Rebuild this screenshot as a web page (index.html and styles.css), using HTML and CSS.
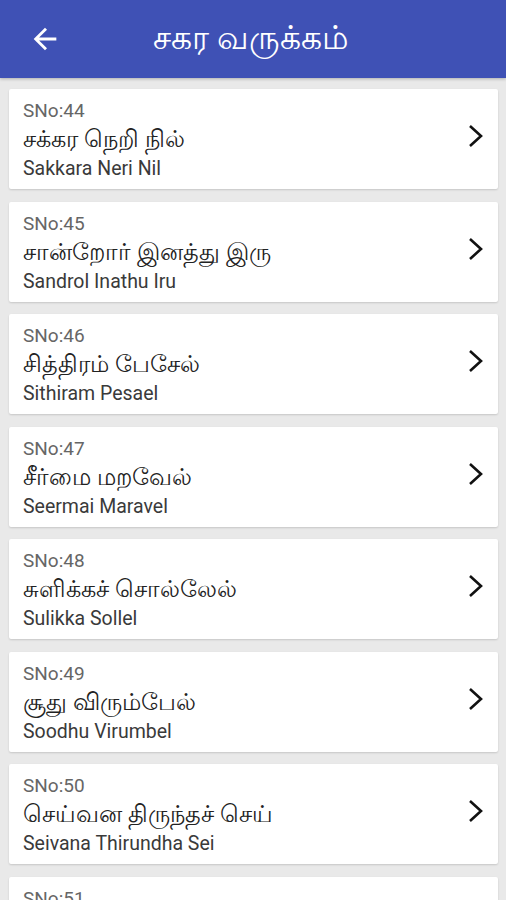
FILE: index.html
```html
<!DOCTYPE html>
<html lang="ta">
<head>
    <meta charset="UTF-8">
    <meta name="viewport" content="width=device-width, initial-scale=1.0">
    <title>சகர வருக்கம்</title>
    <link rel="stylesheet" href="styles.css">
</head>
<body>
    <header class="app-bar">
        <svg class="back-icon" viewBox="0 0 24 24" width="34" height="34">
            <path d="M20 11H7.83l5.59-5.59L12 4l-8 8 8 8 1.41-1.41L7.83 13H20v-2z" fill="#fff"/>
        </svg>
        <h1 class="title">சகர வருக்கம்</h1>
    </header>
    <main class="list">
        <div class="card">
            <div class="card-text">
                <div class="sno">SNo:44</div>
                <div class="tamil">சக்கர நெறி நில்</div>
                <div class="english">Sakkara Neri Nil</div>
            </div>
            <svg class="chevron" viewBox="0 0 16 24" width="16" height="24"><polyline points="2,2 13,12 2,22"/></svg>
        </div>
        <div class="card">
            <div class="card-text">
                <div class="sno">SNo:45</div>
                <div class="tamil">சான்றோர் இனத்து இரு</div>
                <div class="english">Sandrol Inathu Iru</div>
            </div>
            <svg class="chevron" viewBox="0 0 16 24" width="16" height="24"><polyline points="2,2 13,12 2,22"/></svg>
        </div>
        <div class="card">
            <div class="card-text">
                <div class="sno">SNo:46</div>
                <div class="tamil">சித்திரம் பேசேல்</div>
                <div class="english">Sithiram Pesael</div>
            </div>
            <svg class="chevron" viewBox="0 0 16 24" width="16" height="24"><polyline points="2,2 13,12 2,22"/></svg>
        </div>
        <div class="card">
            <div class="card-text">
                <div class="sno">SNo:47</div>
                <div class="tamil">சீர்மை மறவேல்</div>
                <div class="english">Seermai Maravel</div>
            </div>
            <svg class="chevron" viewBox="0 0 16 24" width="16" height="24"><polyline points="2,2 13,12 2,22"/></svg>
        </div>
        <div class="card">
            <div class="card-text">
                <div class="sno">SNo:48</div>
                <div class="tamil">சுளிக்கச் சொல்லேல்</div>
                <div class="english">Sulikka Sollel</div>
            </div>
            <svg class="chevron" viewBox="0 0 16 24" width="16" height="24"><polyline points="2,2 13,12 2,22"/></svg>
        </div>
        <div class="card">
            <div class="card-text">
                <div class="sno">SNo:49</div>
                <div class="tamil">சூது விரும்பேல்</div>
                <div class="english">Soodhu Virumbel</div>
            </div>
            <svg class="chevron" viewBox="0 0 16 24" width="16" height="24"><polyline points="2,2 13,12 2,22"/></svg>
        </div>
        <div class="card">
            <div class="card-text">
                <div class="sno">SNo:50</div>
                <div class="tamil">செய்வன திருந்தச் செய்</div>
                <div class="english">Seivana Thirundha Sei</div>
            </div>
            <svg class="chevron" viewBox="0 0 16 24" width="16" height="24"><polyline points="2,2 13,12 2,22"/></svg>
        </div>
        <div class="card">
            <div class="card-text">
                <div class="sno">SNo:51</div>
                <div class="tamil">சேரிடம் அறிந்து சேர்</div>
                <div class="english">Seridam Arindhu Ser</div>
            </div>
            <svg class="chevron" viewBox="0 0 16 24" width="16" height="24"><polyline points="2,2 13,12 2,22"/></svg>
        </div>
    </main>
</body>
</html>
```

FILE: styles.css
```css
body {
    margin: 0;
    font-family: Roboto, "Noto Sans", sans-serif;
    background-color: #e9e9e9;
    height: 900px;
    overflow: hidden;
}
.app-bar {
    height: 78px;
    background-color: #3f51b5;
    display: flex;
    align-items: center;
    padding-left: 28px;
    box-shadow: 0 1px 3px rgba(0, 0, 0, 0.25);
}
.back-icon {
    display: block;
}
.title {
    margin: 0 0 0 91px;
    color: #fff;
    font-size: 33px;
    font-weight: normal;
}
.list {
    display: flex;
    flex-direction: column;
    gap: 12.5px;
    padding: 11px 8px 0 9px;
}
.card {
    height: 100px;
    flex-shrink: 0;
    box-sizing: border-box;
    background-color: #fff;
    border-radius: 2px;
    box-shadow: 0 1px 2px rgba(0, 0, 0, 0.15);
    display: flex;
    align-items: center;
    padding: 0 14px 0 14px;
}
.card-text {
    flex: 1;
    align-self: flex-start;
    padding-top: 7px;
}
.sno, .tamil, .english {
    line-height: 29px;
    font-size: 19px;
    white-space: nowrap;
}
.sno {
    color: #666;
}
.tamil {
    color: #222;
    font-size: 24px;
}
.english {
    color: #3a3a3a;
    font-size: 19.5px;
}
.chevron {
    display: block;
    margin-top: -6px;
}
.chevron polyline {
    fill: none;
    stroke: #111;
    stroke-width: 2.6;
}
```
